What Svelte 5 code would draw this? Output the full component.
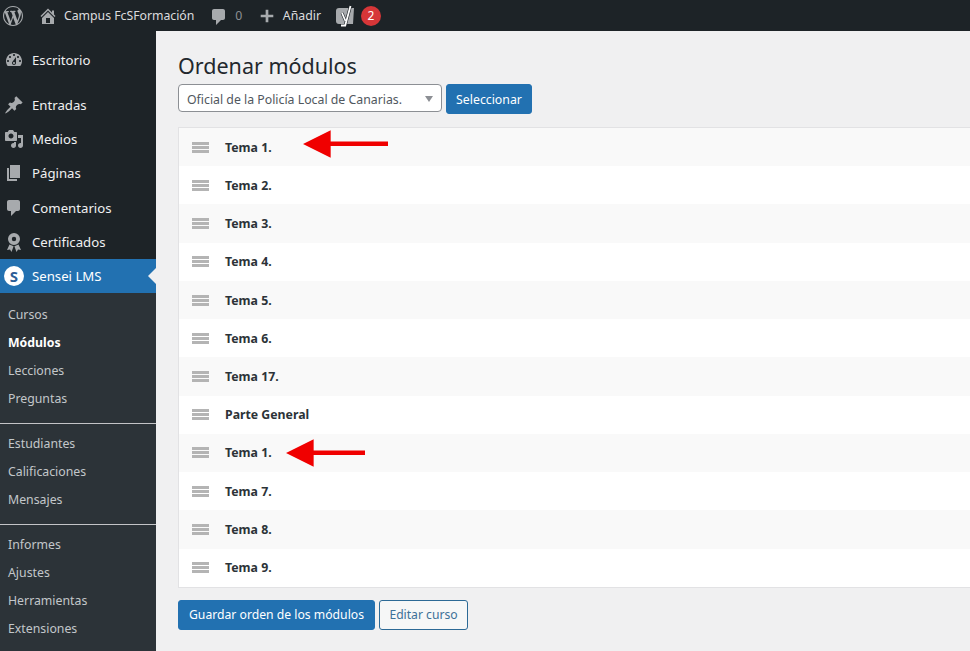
<script>
  const topMenu = [
    { label: "Entradas", icon: "M10.44 3.02l1.82-1.82 6.36 6.35-1.83 1.82c-1.05-.68-2.48-.57-3.41.36l-.75.75c-.92.93-1.04 2.35-.35 3.41l-1.83 1.82-2.41-2.41-2.8 2.79c-.42.42-3.38 2.71-3.8 2.29s1.86-3.39 2.28-3.81l2.79-2.79L4.1 9.36l1.83-1.82c1.05.69 2.48.57 3.4-.36l.75-.75c.93-.92 1.05-2.35.36-3.41z" },
    { label: "Medios", icon: "M13 11V4c0-.55-.45-1-1-1h-1.67L9 1H5L3.67 3H2c-.55 0-1 .45-1 1v7c0 .55.45 1 1 1h10c.55 0 1-.45 1-1zM7 4.5c1.38 0 2.5 1.12 2.5 2.5S8.38 9.5 7 9.5 4.5 8.38 4.5 7 5.62 4.5 7 4.5zM14 6h5v10.5c0 1.38-1.12 2.5-2.5 2.5S14 17.88 14 16.5s1.12-2.5 2.5-2.5c.17 0 .34.02.5.05V9h-3V6zm-4 8.05V13h2v3.5c0 1.38-1.12 2.5-2.5 2.5S7 17.88 7 16.5 8.12 14 9.5 14c.17 0 .34.02.5.05z" },
    { label: "Páginas", icon: "M6 15V2h10v13H6zm-1 1h8v2H3V5h2v11z" },
    { label: "Comentarios", icon: "M5 2h9c1.1 0 2 .9 2 2v7c0 1.1-.9 2-2 2h-2l-5 5v-5H5c-1.1 0-2-.9-2-2V4c0-1.1.9-2 2-2z" },
    { label: "Certificados", icon: "M10 1a6 6 0 1 1 0 12a6 6 0 1 1 0-12zM10 4.8a2.2 2.2 0 1 0 0 4.4a2.2 2.2 0 1 0 0-4.4zM5.5 12.5L3 18l3-.6L7.5 20 9.6 14.2zM14.5 12.5L17 18l-3-.6L12.5 20 10.4 14.2z" }
  ];
  const subGroups = [
    ["Cursos", "Módulos", "Lecciones", "Preguntas"],
    ["Estudiantes", "Calificaciones", "Mensajes"],
    ["Informes", "Ajustes", "Herramientas", "Extensiones"]
  ];
  const modules = ["Tema 1.", "Tema 2.", "Tema 3.", "Tema 4.", "Tema 5.", "Tema 6.", "Tema 17.", "Parte General", "Tema 1.", "Tema 7.", "Tema 8.", "Tema 9."];
</script>

<div class="adminbar">
  <svg class="wp" viewBox="0 0 20 20"><path d="M20 10c0-5.51-4.49-10-10-10C4.48 0 0 4.49 0 10c0 5.52 4.48 10 10 10 5.51 0 10-4.48 10-10zM7.78 15.37L4.37 6.22c.55-.02 1.17-.08 1.17-.08.5-.06.44-1.13-.06-1.11 0 0-1.45.11-2.37.11-.18 0-.37 0-.58-.01C4.12 2.69 6.87 1.11 10 1.11c2.33 0 4.45.87 6.05 2.34-.68-.11-1.65.39-1.65 1.58 0 .74.45 1.36.9 2.1.35.61.55 1.36.55 2.46 0 1.49-1.4 5-1.4 5l-3.03-8.37c.54-.02.82-.17.82-.17.5-.05.44-1.25-.06-1.22 0 0-1.44.12-2.38.12-.87 0-2.33-.12-2.33-.12-.5-.03-.56 1.2-.06 1.22l.92.08 1.26 3.41zM17.41 10c.24-.64.74-1.87.43-4.25.7 1.29 1.05 2.71 1.05 4.25 0 3.29-1.73 6.24-4.4 7.78.97-2.59 1.94-5.2 2.92-7.78zM6.1 18.09C3.12 16.65 1.11 13.53 1.11 10c0-1.3.23-2.48.72-3.59C3.25 10.3 4.67 14.2 6.1 18.09zm4.03-6.63l2.58 6.98c-.86.29-1.76.45-2.71.45-.79 0-1.57-.11-2.29-.33.81-2.38 1.62-4.74 2.42-7.1z" /></svg>
  <svg class="bar-icon home" viewBox="0 0 20 20"><path d="M16 8.5l1.53 1.53-1.06 1.06L10 4.62l-6.47 6.47-1.06-1.06L10 2.5l4 4v-2h2v4zm-6-2.46l6 5.99V18H4v-5.97zM12 17v-5H8v5h4z" /></svg>
  <span class="site">Campus FcSFormación</span>
  <svg class="bar-icon comment" viewBox="0 0 20 20"><path d="M5 2h9c1.1 0 2 .9 2 2v7c0 1.1-.9 2-2 2h-2l-5 5v-5H5c-1.1 0-2-.9-2-2V4c0-1.1.9-2 2-2z" /></svg>
  <span class="count">0</span>
  <svg class="bar-icon plus" viewBox="0 0 20 20"><path d="M17 8.5v3h-5.5V17h-3v-5.5H3v-3h5.5V3h3v5.5z" /></svg>
  <span class="add">Añadir</span>
  <svg class="yoast" viewBox="0 0 22 22">
    <path d="M4 3h15l-1 16H4c-2 0-3-1-3-3V6c0-2 1-3 3-3z" fill="#a7aaad" />
    <path d="M7 8l3.5 8" stroke="#1d2327" stroke-width="3" fill="none" />
    <path d="M15.5 1L10.2 20.5H6" stroke="#1d2327" stroke-width="3" fill="none" />
    <path d="M7 8l3.5 8" stroke="#fff" stroke-width="1.8" fill="none" />
    <path d="M15.5 1L10.2 20.5H6" stroke="#fff" stroke-width="1.8" fill="none" />
  </svg>
  <span class="badge">2</span>
</div>

<div class="layout">
  <nav class="sidebar">
    <div class="dash-item">
      <svg class="menu-icon" viewBox="0 0 20 20"><path d="M3.76 16h12.48c1.1-1.37 1.76-3.11 1.76-5 0-4.42-3.58-8-8-8s-8 3.58-8 8c0 1.89.66 3.63 1.76 5zM10 4c.55 0 1 .45 1 1s-.45 1-1 1-1-.45-1-1 .45-1 1-1zM6 6c.55 0 1 .45 1 1s-.45 1-1 1-1-.45-1-1 .45-1 1-1zm8 0c.55 0 1 .45 1 1s-.45 1-1 1-1-.45-1-1 .45-1 1-1zm-5.37 5.55L12 7v6c0 1.1-.9 2-2 2s-2-.9-2-2c0-.57.24-1.08.63-1.45zM4 10c.55 0 1 .45 1 1s-.45 1-1 1-1-.45-1-1 .45-1 1-1zm12 0c.55 0 1 .45 1 1s-.45 1-1 1-1-.45-1-1 .45-1 1-1zm-5 3c0-.55-.45-1-1-1s-1 .45-1 1 .45 1 1 1 1-.45 1-1z" /></svg>
      <span>Escritorio</span>
    </div>
    <div class="menu-list">
      {#each topMenu as item}
        <div class="menu-item">
          <svg class="menu-icon" viewBox="0 0 20 20"><path d={item.icon} /></svg>
          <span>{item.label}</span>
        </div>
      {/each}
      <div class="menu-item active">
        <span class="sensei-logo">S</span>
        <span>Sensei LMS</span>
      </div>
    </div>
    <div class="submenu">
      {#each subGroups as group}
        <ul>
          {#each group as name}
            <li class:current={name === "Módulos"}>{name}</li>
          {/each}
        </ul>
      {/each}
    </div>
  </nav>

  <main class="content">
    <h1>Ordenar módulos</h1>
    <div class="select-row">
      <div class="select">
        <span>Oficial de la Policía Local de Canarias.</span>
        <i class="caret"></i>
      </div>
      <button class="btn primary select-btn">Seleccionar</button>
    </div>
    <div class="modules">
      {#each modules as mod, i}
        <div class="module" class:odd={i % 2 === 0}>
          <span class="handle"><i></i><i></i><i></i></span>
          <strong>{mod}</strong>
          {#if i === 0}
            <svg class="arrow first" viewBox="0 0 86 28"><path d="M0 14L28 0V11.5H86V16H28V28z" /></svg>
          {:else if i === 8}
            <svg class="arrow second" viewBox="0 0 80 28"><path d="M0 14L28 0V11.5H80V16H28V28z" /></svg>
          {/if}
        </div>
      {/each}
    </div>
    <div class="actions">
      <button class="btn primary save">Guardar orden de los módulos</button>
      <button class="btn secondary">Editar curso</button>
    </div>
  </main>
</div>

<style>
  :global(body) {
    margin: 0;
    background: #f0f0f1;
    overflow: hidden;
    font-family: "Noto Sans", "Open Sans", sans-serif;
    font-size: 13px;
    color: #2c3338;
  }
  svg {
    display: block;
    fill: currentColor;
  }

  .adminbar {
    height: 31px;
    background: #1d2327;
    color: #c3c4c7;
    display: flex;
    align-items: center;
    font-size: 12.3px;
    overflow: hidden;
  }
  .wp {
    width: 20px;
    height: 20px;
    margin-left: 3px;
    color: #a7aaad;
  }
  .bar-icon {
    color: #a7aaad;
    flex: none;
  }
  .home {
    width: 20px;
    height: 20px;
    margin-left: 15px;
  }
  .site {
    margin-left: 6px;
    color: #dcdcde;
    letter-spacing: -0.03px;
  }
  .comment {
    width: 20px;
    height: 20px;
    margin-left: 15px;
    margin-top: 3px;
  }
  .count {
    margin-left: 6px;
    color: #8c8f94;
  }
  .plus {
    width: 18px;
    height: 18px;
    margin-left: 16px;
  }
  .add {
    margin-left: 6.5px;
    color: #dcdcde;
  }
  .yoast {
    width: 22px;
    height: 22px;
    margin-left: 14px;
  }
  .badge {
    width: 20px;
    height: 20px;
    margin-left: 4px;
    border-radius: 50%;
    background: #d63638;
    color: #fff;
    display: flex;
    align-items: center;
    justify-content: center;
    font-size: 12px;
  }

  .layout {
    display: flex;
    height: 620px;
    overflow: hidden;
  }
  .sidebar {
    width: 156px;
    flex: none;
    background: #1d2327;
    color: #f0f0f1;
    display: flex;
    flex-direction: column;
  }
  .dash-item,
  .menu-item {
    height: 34.3px;
    flex: none;
    display: flex;
    align-items: center;
    gap: 8px;
    padding-left: 4px;
    font-size: 13.2px;
  }
  .dash-item {
    margin-top: 12px;
  }
  .menu-list {
    flex: none;
    margin-top: 10.2px;
  }
  .menu-icon {
    width: 20px;
    height: 20px;
    flex: none;
    color: #a7aaad;
  }
  .active {
    background: #2271b1;
    color: #fff;
    position: relative;
  }
  .active::after {
    content: "";
    position: absolute;
    right: 0;
    top: 9px;
    border: 8px solid transparent;
    border-right-color: #f0f0f1;
    border-left-width: 0;
  }
  .sensei-logo {
    width: 20px;
    height: 20px;
    border-radius: 50%;
    background: #fff;
    color: #2c5d96;
    font-weight: 700;
    font-size: 15px;
    display: flex;
    align-items: center;
    justify-content: center;
  }
  .submenu {
    flex: 1 0 auto;
    background: #2c3338;
    color: #c3c7ca;
    font-size: 12.3px;
  }
  .submenu ul {
    list-style: none;
    margin: 0;
    padding: 5.9px 0 9.4px;
    border-bottom: 1px solid #c3c4c7;
  }
  .submenu ul:first-child {
    padding-top: 7.6px;
  }
  .submenu ul:last-child {
    border-bottom: 0;
  }
  .submenu li {
    height: 28.2px;
    line-height: 28.2px;
    padding-left: 8px;
  }
  .submenu .current {
    color: #fff;
    font-weight: 700;
  }

  .content {
    flex: 1;
    min-width: 0;
    padding: 20px 0 0 22px;
  }
  h1 {
    margin: 0;
    font-size: 21.5px;
    font-weight: 400;
    line-height: 29px;
    color: #23282d;
  }
  .select-row {
    display: flex;
    align-items: flex-start;
    gap: 4px;
    margin-top: 4px;
  }
  .select {
    width: 264px;
    height: 28px;
    box-sizing: border-box;
    border: 1px solid #8c8f94;
    border-radius: 4px;
    background: #fff;
    display: flex;
    align-items: center;
    justify-content: space-between;
    padding: 2px 8px 0;
    font-size: 12.3px;
    color: #50575e;
  }
  .caret {
    border: 4px solid transparent;
    border-top: 6px solid #8c8f94;
    border-bottom: 0;
  }
  .btn {
    font: inherit;
    font-size: 12.3px;
    border-radius: 3px;
    height: 30px;
    padding: 0 10px;
    cursor: pointer;
  }
  .primary {
    background: #2271b1;
    border: 1px solid #2271b1;
    color: #fff;
  }
  .secondary {
    background: #f6f7f7;
    border: 1px solid #2c6a96;
    color: #3d7198;
    font-size: 12.15px;
    width: 89px;
    padding: 0;
  }
  .select-btn {
    width: 86px;
    padding: 0;
  }
  .modules {
    margin-top: 13px;
    border: 1px solid #e2e2e4;
    border-width: 1px 0 0 1px;
    box-shadow: 0 1px 0 #e2e2e4;
    background: #fff;
    width: 100%;
    box-sizing: border-box;
  }
  .module {
    height: 38.24px;
    display: flex;
    align-items: center;
    position: relative;
    background: #fff;
  }
  .module.odd {
    background: #f9f9f9;
  }
  .handle {
    width: 17px;
    margin-left: 13px;
    display: flex;
    flex-direction: column;
    gap: 1px;
  }
  .handle i {
    height: 3px;
    background: #b4b4b4;
  }
  .module strong {
    margin-left: 16px;
    font-size: 12.3px;
    font-weight: 700;
    color: #2c3338;
  }
  .arrow {
    position: absolute;
    fill: #f00000;
    height: 28px;
  }
  .arrow.first {
    left: 124px;
    top: 2px;
    width: 85px;
  }
  .arrow.second {
    left: 107px;
    top: 5px;
    width: 79px;
  }
  .actions {
    display: flex;
    gap: 4px;
    margin-top: 13px;
  }
  .save {
    width: 197px;
    padding: 0;
    font-size: 12.2px;
  }
</style>
